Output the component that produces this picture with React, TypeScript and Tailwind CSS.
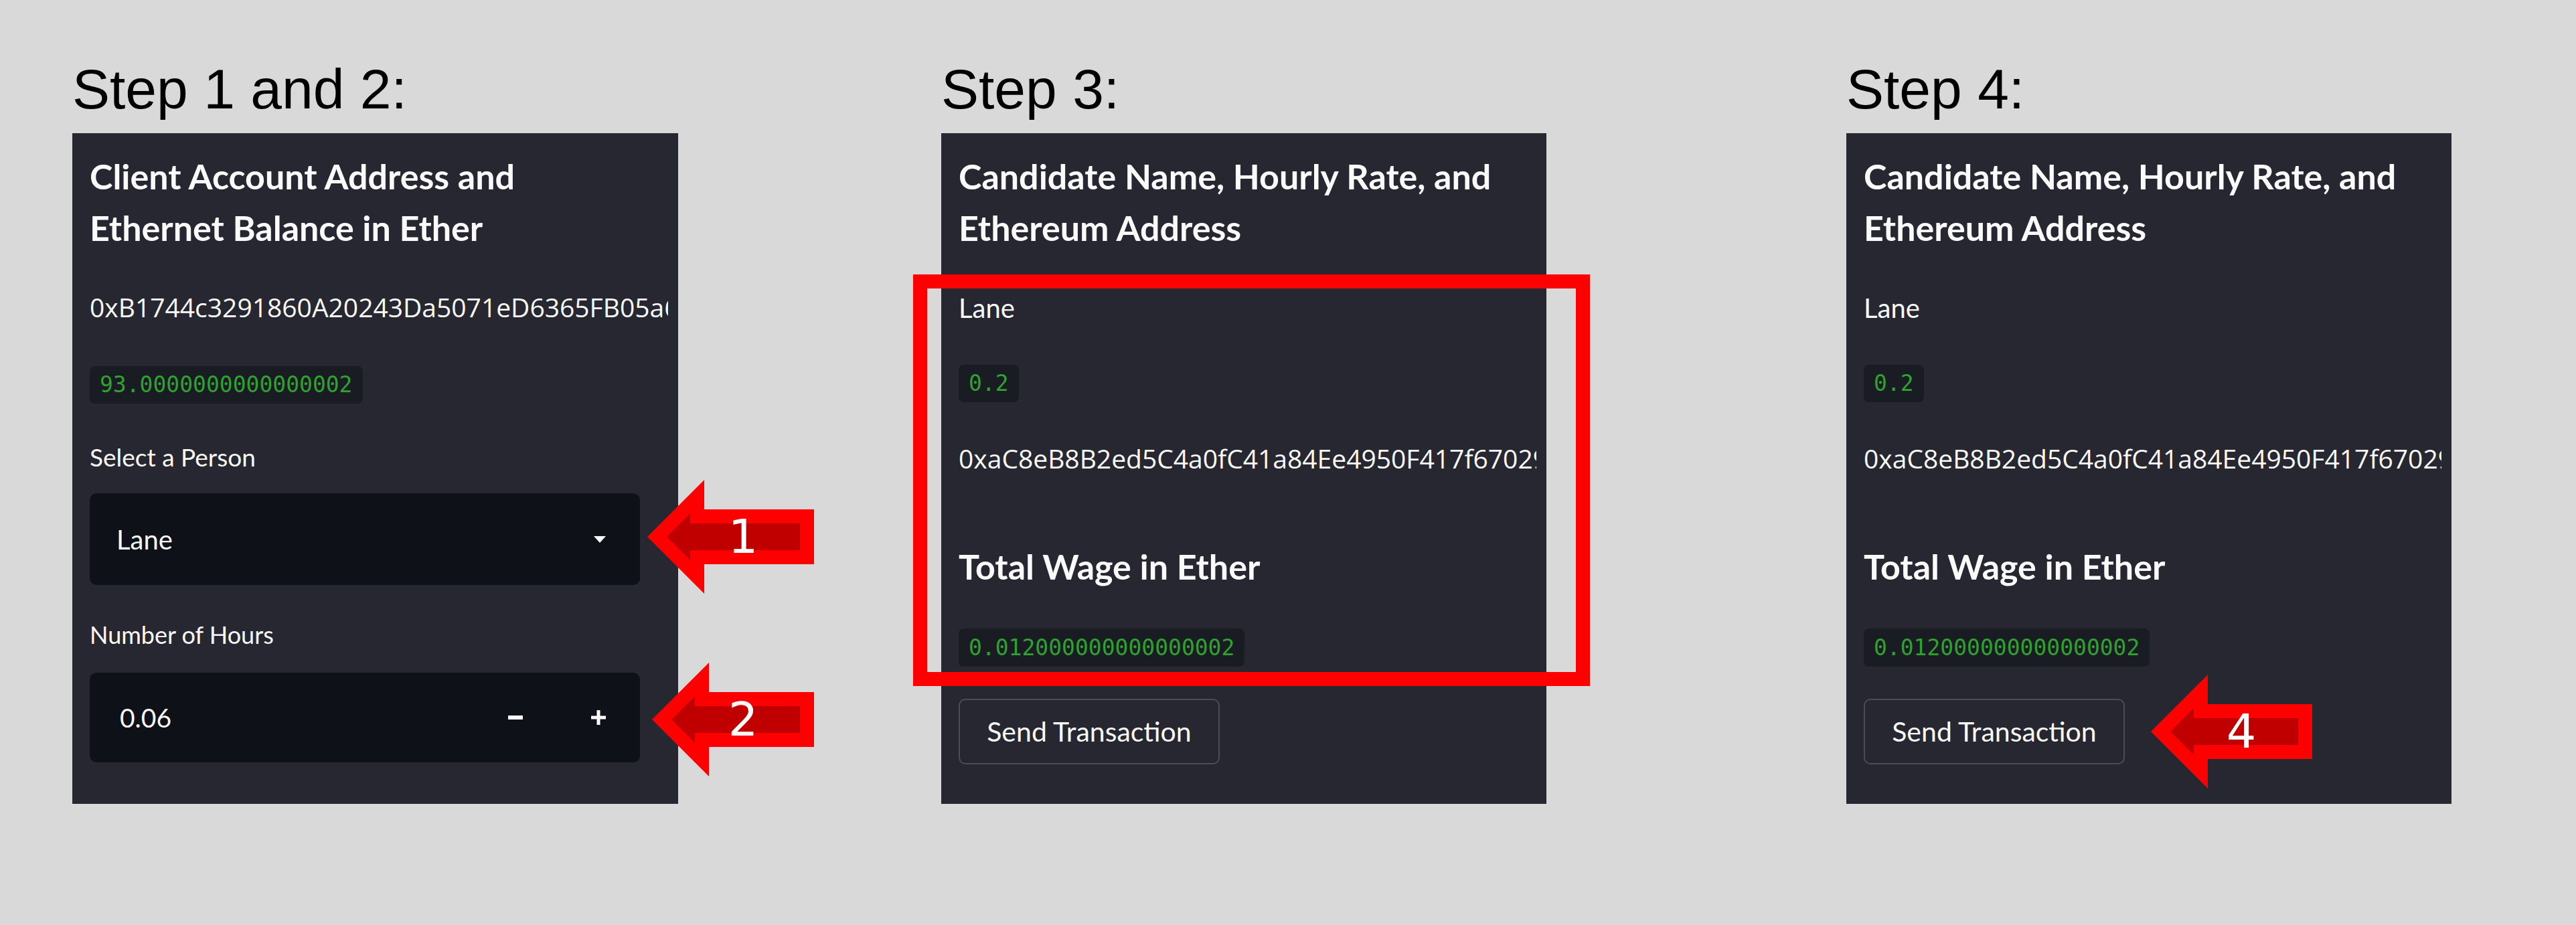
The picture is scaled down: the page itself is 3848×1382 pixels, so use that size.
import React from 'react';

const sans = "font-['Lato',sans-serif]";

const Arrow = ({ w, label }: { w: number; label: string }) => {
  const outer = `0,85 85,0 85,44 ${w},44 ${w},126 85,126 85,170`;
  const inner = `29,85 64,50 64,65 ${w - 21},65 ${w - 21},105 64,105 64,120`;
  return (
    <div className="relative h-[170px]" style={{ width: w }}>
      <svg width={w} height={170} viewBox={`0 0 ${w} 170`} className="block">
        <polygon points={outer} fill="#ff0000" />
        <polygon points={inner} fill="#c00000" />
      </svg>
      <span className="absolute top-0 right-[66px] w-[80px] h-[170px] flex items-center justify-center font-['DejaVu_Sans',sans-serif] text-[70px] leading-none text-white">
        {label}
      </span>
    </div>
  );
};

const Code = ({ children, className = '' }: { children: React.ReactNode; className?: string }) => (
  <div
    className={`self-start flex items-center h-[56px] px-[15px] rounded-[8px] bg-[#1a1c24] font-['DejaVu_Sans_Mono',monospace] text-[33px] text-[#2fa12f] ${className}`}
  >
    {children}
  </div>
);

const Heading = ({ children, className = '' }: { children: React.ReactNode; className?: string }) => (
  <div className={`${sans} font-bold text-[52px] leading-[77px] text-[#fafafa] ${className}`}>{children}</div>
);

// long addresses run past the sidebar edge and get clipped, as in the screenshot
const Address = ({ children, className = '' }: { children: React.ReactNode; className?: string }) => (
  <div
    className={`font-['Open_Sans',sans-serif] text-[39px] leading-[48px] text-[#fafafa] whitespace-nowrap overflow-hidden mr-[15px] ${className}`}
  >
    {children}
  </div>
);

const SendButton = ({ arrow }: { arrow?: boolean }) => (
  <div className="relative self-start mt-[48px]">
    <button className={`${sans} h-[98px] w-[390px] rounded-[10px] border-2 border-[#4b4c55] bg-[#262730] text-[41px] text-[#fafafa]`}>
      Send Transaction
    </button>
    {arrow && (
      <div className="absolute left-[calc(100%+39px)] top-[-36px]">
        <Arrow w={241} label="4" />
      </div>
    )}
  </div>
);

const StepTitle = ({ children }: { children: React.ReactNode }) => (
  <div className="font-['Liberation_Sans',Arial,sans-serif] text-[84px] leading-none text-black mb-[24px]">
    {children}
  </div>
);

const CandidatePanel = ({ highlight, arrow }: { highlight?: boolean; arrow?: boolean }) => (
  <div className="relative flex flex-col w-[904px] h-[1002px] bg-[#262730] pt-[26px] pl-[26px]">
    <Heading>
      Candidate Name, Hourly Rate, and
      <br />
      Ethereum Address
    </Heading>
    <div className={`${sans} mt-[57px] text-[40px] leading-[48px] text-[#fafafa]`}>Lane</div>
    <Code className="mt-[61px]">0.2</Code>
    <Address className="mt-[60px]">0xaC8eB8B2ed5C4a0fC41a84Ee4950F417f67029</Address>
    <Heading className="mt-[99px]">Total Wage in Ether</Heading>
    <Code className="mt-[54px] h-[57px]">0.012000000000000002</Code>
    <SendButton arrow={arrow} />
    {highlight && (
      <div className="absolute left-[-42px] top-[211px] w-[1011px] h-[615px] border-[21px] border-[#ff0000]" />
    )}
  </div>
);

export default function App() {
  return (
    <div className="w-[3848px] h-[1382px] bg-[#d9d9d9] flex items-start pl-[108px] pt-[91px]">
      <div className="flex flex-col">
        <StepTitle>Step 1 and 2:</StepTitle>
        <div className="relative flex flex-col w-[905px] h-[1002px] bg-[#262730] pt-[26px] pl-[26px]">
          <Heading>
            Client Account Address and
            <br />
            Ethernet Balance in Ether
          </Heading>
          <Address className="mt-[56px]">0xB1744c3291860A20243Da5071eD6365FB05a6</Address>
          <Code className="mt-[64px]">93.0000000000000002</Code>
          <div className={`${sans} mt-[58px] text-[37px] leading-[44px] text-[#fafafa]`}>Select a Person</div>
          <div className="relative mt-[32px] w-[822px] h-[137px] rounded-[10px] bg-[#0e1117] flex items-center pl-[40px] pr-[51px]">
            <span className={`${sans} flex-1 text-[40px] text-[#fafafa]`}>Lane</span>
            <svg width="18" height="10" viewBox="0 0 18 10">
              <polygon points="0,0 18,0 9,10" fill="#fafafa" />
            </svg>
            <div className="absolute left-[calc(100%+11px)] top-[-20px]">
              <Arrow w={249} label="1" />
            </div>
          </div>
          <div className={`${sans} mt-[52px] text-[36px] leading-[44px] text-[#fafafa]`}>Number of Hours</div>
          <div className="relative mt-[35px] w-[822px] h-[134px] rounded-[10px] bg-[#0e1117] flex items-center pl-[45px]">
            <span className={`${sans} flex-1 text-[39px] text-[#fafafa]`}>0.06</span>
            <div className="w-[124px] h-full flex items-center justify-center">
              <svg width="24" height="24" viewBox="0 0 24 24">
                <line x1="1" y1="12" x2="23" y2="12" stroke="#fafafa" strokeWidth="6" />
              </svg>
            </div>
            <div className="w-[124px] h-full flex items-center justify-center">
              <svg width="24" height="24" viewBox="0 0 24 24">
                <line x1="1" y1="12" x2="23" y2="12" stroke="#fafafa" strokeWidth="5" />
                <line x1="12" y1="1" x2="12" y2="23" stroke="#fafafa" strokeWidth="5" />
              </svg>
            </div>
            <div className="absolute left-[calc(100%+18px)] top-[-15px]">
              <Arrow w={242} label="2" />
            </div>
          </div>
        </div>
      </div>

      <div className="flex flex-col ml-[393px]">
        <StepTitle>Step 3:</StepTitle>
        <CandidatePanel highlight />
      </div>

      <div className="flex flex-col ml-[448px]">
        <StepTitle>Step 4:</StepTitle>
        <CandidatePanel arrow />
      </div>
    </div>
  );
}
